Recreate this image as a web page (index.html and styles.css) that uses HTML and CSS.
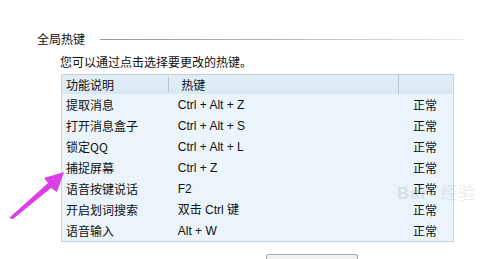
FILE: index.html
```html
<!DOCTYPE html>
<html>
<head>
<meta charset="utf-8">
<link rel="stylesheet" href="styles.css">
</head>
<body>
<div class="page">
  <div class="title-row">
    <span class="title">全局热键</span>
    <span class="rule"></span>
  </div>
  <div class="desc">您可以通过点击选择要更改的热键。</div>
  <div class="table">
    <div class="row head">
      <div class="c1">功能说明</div>
      <div class="c2 sep">热键</div>
      <div class="c3 sep"></div>
    </div>
    <div class="row"><div class="c1">提取消息</div><div class="c2 key">Ctrl + Alt + Z</div><div class="c3">正常</div></div>
    <div class="row"><div class="c1">打开消息盒子</div><div class="c2 key">Ctrl + Alt + S</div><div class="c3">正常</div></div>
    <div class="row"><div class="c1">锁定QQ</div><div class="c2 key">Ctrl + Alt + L</div><div class="c3">正常</div></div>
    <div class="row"><div class="c1">捕捉屏幕</div><div class="c2 key">Ctrl + Z</div><div class="c3">正常</div></div>
    <div class="row"><div class="c1">语音按键说话</div><div class="c2 key">F2</div><div class="c3">正常</div></div>
    <div class="row"><div class="c1">开启划词搜索</div><div class="c2 key">双击 Ctrl 键</div><div class="c3">正常</div></div>
    <div class="row"><div class="c1">语音输入</div><div class="c2 key">Alt + W</div><div class="c3">正常</div></div>
  </div>
  <div class="btn-row"><div class="btn"></div></div>
</div>
<div class="watermark">Bai<span class="wm-cn">经验</span></div>
<svg class="arrow" width="80" height="60" viewBox="0 0 80 60">
  <polygon points="9,57 13,58 51,27 57,31 64,11 44,17 48,22" fill="#dc3fe6"/>
</svg>
</body>
</html>
```
FILE: styles.css
```css
html, body {
  margin: 0;
  background: #ffffff;
  overflow: hidden;
}
body {
  font-family: "Noto Sans CJK SC", "Liberation Sans", sans-serif;
  font-size: 12px;
  color: #111;
  position: relative;
  width: 499px;
  height: 259px;
}
.page {
  padding: 31px 0 0 37px;
}
.title-row {
  display: flex;
  align-items: center;
  height: 16px;
  gap: 15px;
}
.title {
  font-size: 12px;
  line-height: 16px;
}
.rule {
  width: 365px;
  height: 1px;
  background: linear-gradient(to right, #8e9ca4 0%, #a9b6bc 45%, #e6ecef 100%);
}
.desc {
  margin: 7px 0 0 23px;
  line-height: 16px;
}
.table {
  margin: 4px 0 0 24px;
  width: 391px;
  border: 1px solid #c9d7e1;
  border-top-color: #c3d0da;
  background: #eaf4fa;
}
.row {
  display: flex;
  height: 21px;
  align-items: center;
  line-height: 16px;
}
.row.head {
  height: 19px;
  background: linear-gradient(#e2eef7, #d9e8f3);
}
.c1 {
  width: 105px;
  padding-left: 4px;
}
.c2 {
  width: 221px;
  padding-left: 7px;
}
.c2.key {
  font-family: "Liberation Sans", "Noto Sans CJK SC", sans-serif;
  font-size: 12px;
}
.head .c2 {
  padding-left: 12px;
}
.c3 {
  width: 40px;
  padding-left: 15px;
}
.sep {
  border-left: 1px solid #b7c8d4;
  height: 15px;
  display: flex;
  align-items: center;
  margin-left: -1px;
}
.head .c3.sep {
  height: 19px;
}
.btn-row {
  padding: 12px 0 0 229px;
}
.btn {
  width: 90px;
  height: 4px;
  border: 1px solid #a8a8a8;
  border-bottom: none;
  border-radius: 3px 3px 0 0;
  background: linear-gradient(#f6f6f6, #eeeeee);
}
.watermark {
  position: absolute;
  left: 397px;
  top: 182px;
  font-family: "Liberation Sans", sans-serif;
  font-weight: bold;
  font-size: 17px;
  line-height: 20px;
  color: rgba(170, 175, 180, 0.3);
  letter-spacing: 1px;
}
.wm-cn {
  font-family: "Noto Sans CJK SC", sans-serif;
  font-weight: normal;
  margin-left: 14px;
  color: rgba(170, 175, 180, 0.25);
}
.arrow {
  position: absolute;
  left: 0;
  top: 161px;
}
```
